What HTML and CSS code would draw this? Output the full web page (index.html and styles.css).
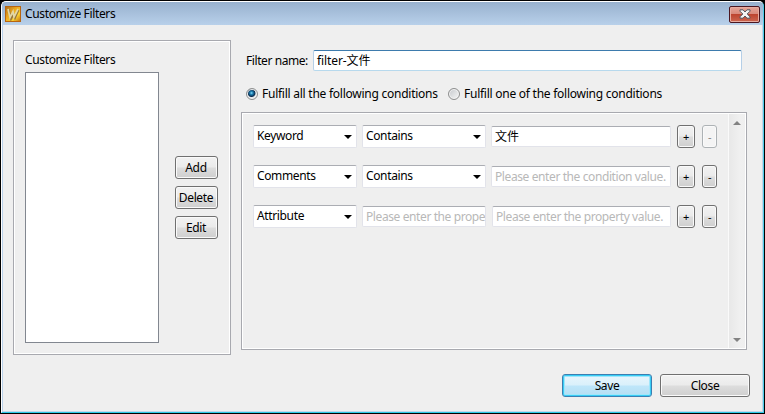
FILE: index.html
```
<!DOCTYPE html>
<html lang="en">
<head>
<meta charset="utf-8">
<title>Customize Filters</title>
<link rel="stylesheet" href="styles.css">
</head>
<body>
<div class="window">
  <header class="titlebar">
    <svg class="logo" width="16" height="16" viewBox="0 0 16 16">
      <defs>
        <linearGradient id="gold" x1="0" y1="0" x2="1" y2="1">
          <stop offset="0" stop-color="#ad6a12"/><stop offset=".4" stop-color="#e9a620"/><stop offset=".7" stop-color="#f9cf30"/><stop offset="1" stop-color="#c26d10"/>
        </linearGradient>
      </defs>
      <rect x=".5" y=".5" width="15" height="15" fill="url(#gold)" stroke="#b8640f"/>
      <path d="M4 4l2 9 2.500-5 1.500 4 3.500-8" fill="none" stroke="#96763c" stroke-width="1.800"/>
      <path d="M3 3l2 8.500 3-6 1 5.500 4-8" fill="none" stroke="#e3d6a4" stroke-width="1.700"/>
    </svg>
    <span class="title">Customize Filters</span>
    <div class="winclose">
      <svg width="12" height="10" viewBox="0 0 12 10">
        <path d="M1 .8h3L6 3 8 .8h3v1.400L8.200 5 11 7.800v1.400H8L6 7 4 9.200H1V7.800L3.800 5 1 2.200z" fill="#f4f4f4" stroke="#53565f" stroke-width="1"/>
      </svg>
    </div>
  </header>
  <main class="content">
    <section class="group filters">
      <div class="list-col">
        <span class="label">Customize Filters</span>
        <div class="listbox"></div>
      </div>
      <div class="actions">
        <div class="btn"><span>Add</span></div>
        <div class="btn"><span>Delete</span></div>
        <div class="btn"><span>Edit</span></div>
      </div>
    </section>
    <section class="detail">
      <div class="name-row">
        <span class="label">Filter name:</span>
        <div class="field name focused">filter-文件</div>
      </div>
      <div class="radios">
        <span class="radio on"></span><span class="opt">Fulfill all the following conditions</span>
        <span class="radio"></span><span class="opt">Fulfill one of the following conditions</span>
      </div>
      <div class="group conditions">
        <div class="rows">
          <div class="row">
            <div class="combo">Keyword<i class="arrow"></i></div>
            <div class="combo">Contains<i class="arrow"></i></div>
            <div class="field value">文件</div>
            <div class="btn mini">+</div>
            <div class="btn mini off">-</div>
          </div>
          <div class="row">
            <div class="combo">Comments<i class="arrow"></i></div>
            <div class="combo">Contains<i class="arrow"></i></div>
            <div class="field hint">Please enter the condition value.</div>
            <div class="btn mini">+</div>
            <div class="btn mini">-</div>
          </div>
          <div class="row">
            <div class="combo">Attribute<i class="arrow"></i></div>
            <div class="field hint">Please enter the prope</div>
            <div class="field hint last">Please enter the property value.</div>
            <div class="btn mini">+</div>
            <div class="btn mini">-</div>
          </div>
        </div>
        <div class="scroll">
          <svg width="8" height="4" viewBox="0 0 8 4"><path d="M0 4l4-4 4 4z" fill="#828282"/></svg>
          <svg width="8" height="4" viewBox="0 0 8 4"><path d="M0 0l4 4 4-4z" fill="#828282"/></svg>
        </div>
      </div>
    </section>
  </main>
  <footer class="footer">
    <div class="btn wide primary">Save</div>
    <div class="btn wide">Close</div>
  </footer>
</div>
</body>
</html>
```
FILE: styles.css
```
* { box-sizing: border-box; }
html, body { margin: 0; background: #000; }
body {
  width: 765px;
  height: 414px;
  overflow: hidden;
  font: 12px/16px "Noto Sans", "Noto Sans CJK SC", sans-serif;
  letter-spacing: -0.36px;
  color: #000;
  white-space: nowrap;
}
.window {
  width: 763px;
  height: 412px;
  margin: 1px;
  display: flex;
  flex-direction: column;
  background: #efefef;
  border-radius: 5px 5px 0 0;
  border: 1px solid #fff;
  border-right-color: #4ccbe8;
  border-bottom-color: #2bc9e6;
  box-shadow: inset 1px 0 #b9d1ea, inset -1px -1px #c3d5e8;
  overflow: hidden;
}
.titlebar {
  height: 23px;
  flex: none;
  display: flex;
  align-items: center;
  padding: 0 3px;
  background: linear-gradient(#98b1ce, #b8d0ea);
}
.logo { margin-right: 4px; }
.title { padding-top: 1px; }
.winclose {
  width: 31px;
  height: 17px;
  margin: 1px 0 0 auto;
  display: flex;
  align-items: center;
  justify-content: center;
  border: 1px solid #4b1620;
  border-radius: 2px;
  background: linear-gradient(#e6a598, #d8897b 46%, #bd4530 50%, #cc6650);
  box-shadow: inset 0 0 0 1px #e7aca0;
}
.content {
  display: flex;
  gap: 10px;
  padding: 15px 0 0 11px;
}
.group {
  border: 1px solid #a8a9af;
  box-shadow: inset 0 0 0 1px #fff;
}
.filters {
  width: 218px;
  height: 315px;
  display: flex;
  gap: 16px;
  padding: 11px;
}
.list-col { width: 134px; }
.label { display: block; }
.listbox {
  height: 271px;
  margin-top: 4px;
  background: #fff;
  border: 1px solid #828790;
}
.actions {
  width: 43px;
  padding-top: 104px;
  display: flex;
  flex-direction: column;
  gap: 7px;
}
.btn {
  height: 23px;
  flex: none;
  display: flex;
  align-items: center;
  justify-content: center;
  border: 1px solid #707070;
  border-radius: 3px;
  background: linear-gradient(#f2f2f2, #ebebeb 48%, #dddddd 52%, #cfcfcf);
  box-shadow: inset 0 0 0 1px #fafafa;
}
.actions .btn { padding-right: 1px; }
.detail { width: 506px; padding-top: 10px; }
.name-row {
  display: flex;
  align-items: center;
  padding-left: 5px;
}
.name-row .label { width: 67px; letter-spacing: -0.42px; }
.field {
  height: 21px;
  padding: 0 3px;
  line-height: 20px;
  background: #fff;
  border: 1px solid #e2e3ea;
  border-top-color: #abadb3;
  border-radius: 2px;
  overflow: hidden;
}
.field.name { width: 429px; letter-spacing: -0.1px; }
.field.value { letter-spacing: 0; }
.focused {
  border-color: #b5cfe7;
  border-top-color: #3d7bad;
  border-bottom-color: #b7d9ed;
}
.radios {
  display: flex;
  align-items: center;
  height: 16px;
  margin-top: 15px;
  padding-left: 5px;
}
.radio {
  width: 12px;
  height: 12px;
  margin-right: 4px;
  border: 1px solid #8e8f8f;
  border-radius: 50%;
  background: linear-gradient(135deg, #c5c8cc, #f7f7f7);
  box-shadow: inset 0 0 0 1px #f4f4f4;
}
.radio.on { background: radial-gradient(circle at 45% 40%, #8edcf5 0, #1c81b5 1.5px, #0b2b4c 3.500px, #e4e6e8 4.500px); }
.opt { width: 186px; letter-spacing: -0.25px; }
.conditions {
  height: 238px;
  margin-top: 10px;
  display: flex;
  justify-content: space-between;
  padding: 1px;
}
.rows {
  display: flex;
  flex-direction: column;
  gap: 17px;
  padding: 11px 0 0 10px;
}
.row {
  display: grid;
  grid-template-columns: 104px 124px 180px 18px 15px;
  column-gap: 5px;
  align-items: center;
  height: 23px;
}
.row .btn { margin-left: 1px; width: 18px; }
.row .btn:last-child { margin-left: 3px; width: 15px; }
.combo {
  height: 23px;
  display: flex;
  align-items: center;
  justify-content: space-between;
  padding: 0 4px 1px 3px;
  background: #fff;
  border: 1px solid #e2e3ea;
  border-top-color: #abadb3;
  border-radius: 2px;
}
.arrow {
  margin-top: 2px;
  border: 4px solid transparent;
  border-top-color: #000;
  border-bottom: 0;
}
.hint { color: #b8b8b8; letter-spacing: -0.4px; }
.hint.last { margin-left: 1px; }
.mini { font-size: 11px; }
.off {
  color: #838383;
  border-color: #adb2b5;
  background: #f4f4f4;
}
.scroll {
  width: 17px;
  display: flex;
  flex-direction: column;
  justify-content: space-between;
  align-items: center;
  padding: 7px 0 6px;
  background: linear-gradient(90deg, #fafafa 1px, #e8e8e8 1px, #f0f0f0 70%, #efefef);
}
.footer {
  display: flex;
  justify-content: flex-end;
  gap: 8px;
  margin-top: 19px;
  padding-right: 13px;
}
.wide { width: 90px; }
.primary {
  border-color: #3c7fb1;
  background: linear-gradient(#e8f5fc, #daf0fb 48%, #bee6fa 52%, #b5def2);
  box-shadow: inset 0 0 0 1px #37cdf5, inset 0 0 0 2px #a0e6fb;
}
```
